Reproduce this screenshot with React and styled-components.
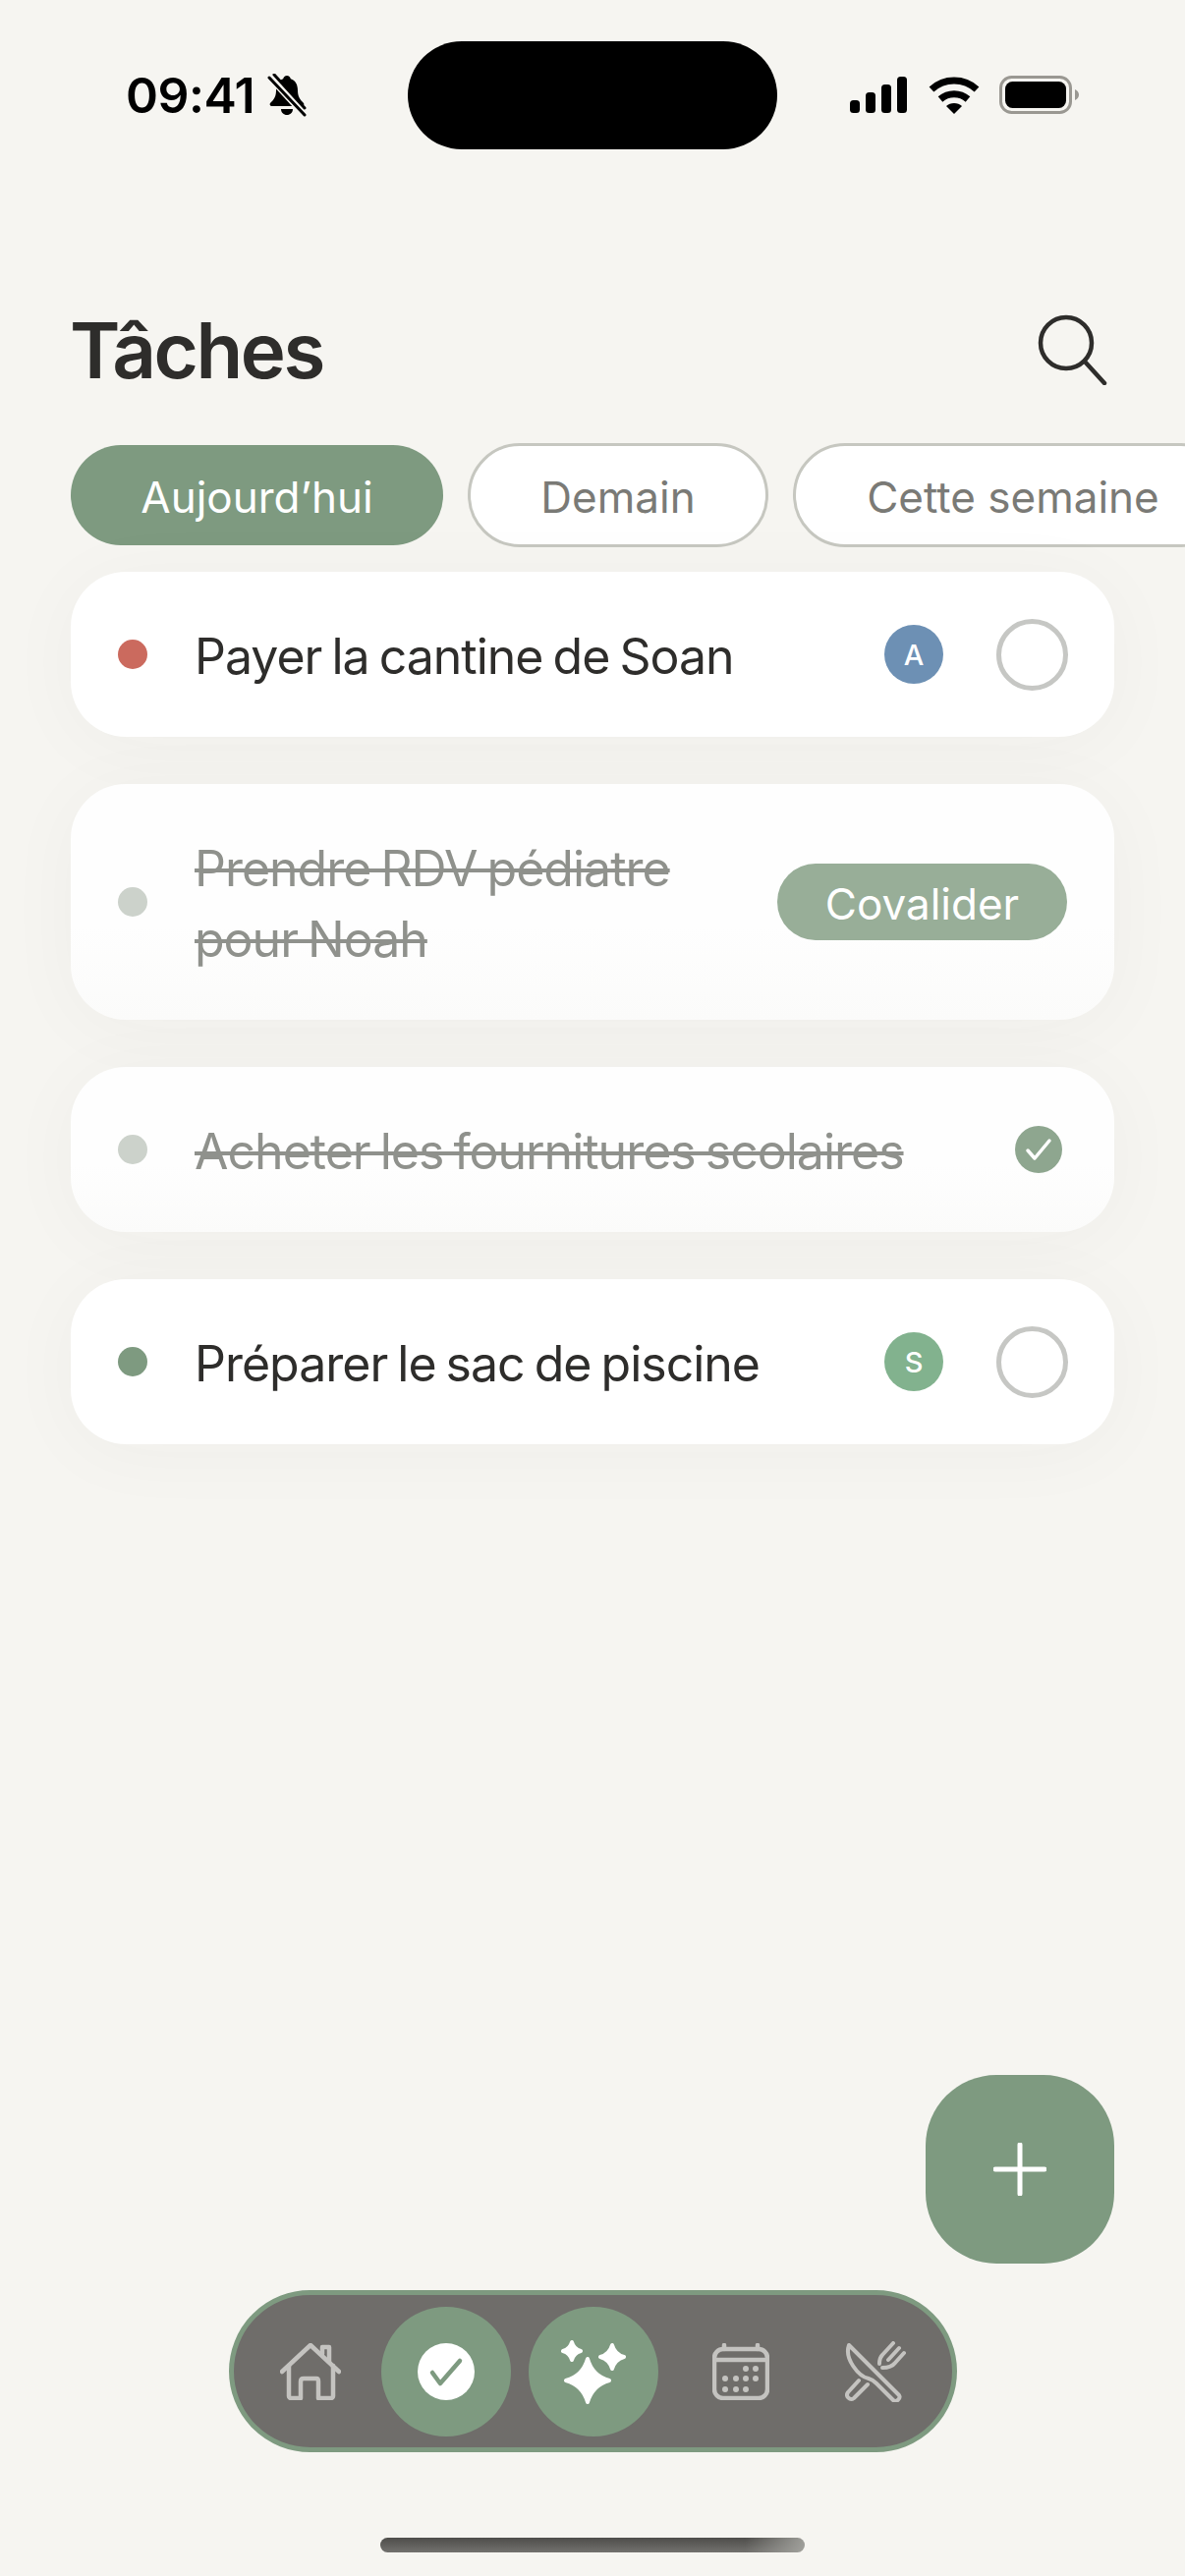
import styled, { createGlobalStyle } from "styled-components";

const SANS = `Inter, "Liberation Sans", sans-serif`;

const Global = createGlobalStyle`
  html, body { margin: 0; padding: 0; background: #f6f5f1; }
  * { box-sizing: border-box; }
`;

const Screen = styled.div`
  width: 1206px;
  height: 2622px;
  overflow: hidden;
  display: flex;
  flex-direction: column;
  background: #f6f5f1;
  font-family: ${SANS};
  color: #2e2d2b;
`;

const StatusBar = styled.div`
  height: 194px;
  padding: 42px 72px 0 128px;
  display: flex;
  align-items: flex-start;
`;

const Clock = styled.div`
  display: flex;
  align-items: center;
  gap: 13px;
  width: 287px;
  height: 110px;
  font-size: 50px;
  font-weight: 600;
  color: #000;
  letter-spacing: -0.5px;
`;

const Island = styled.div`
  width: 376px;
  height: 110px;
  border-radius: 55px;
  background: #000;
`;

const StatusIcons = styled.div`
  display: flex;
  align-items: center;
  gap: 20px;
  height: 110px;
  margin-left: 74px;
`;

const Header = styled.header`
  display: flex;
  justify-content: space-between;
  align-items: center;
  height: 124px;
  margin-top: 100px;
  padding: 0 79px 0 71px;
`;

const Title = styled.h1`
  margin: 0;
  font-size: 78px;
  font-weight: 600;
  letter-spacing: -2.5px;
  color: #2e2d2b;
`;

const Chips = styled.div`
  display: flex;
  align-items: center;
  gap: 25px;
  margin-top: 33px;
  padding-left: 72px;
  height: 106px;
  white-space: nowrap;
`;

const Chip = styled.div`
  flex: none;
  display: flex;
  align-items: center;
  justify-content: center;
  width: ${({ $w }) => $w}px;
  height: ${({ $active }) => ($active ? 102 : 106)}px;
  padding-top: 3px;
  border-radius: 53px;
  font-size: 44px;
  background: ${({ $active }) => ($active ? "#7e9a80" : "#fff")};
  color: ${({ $active }) => ($active ? "#fff" : "#7a7a76")};
  border: ${({ $active }) => ($active ? "none" : "3px solid #c6c7c0")};
`;

const List = styled.div`
  display: flex;
  flex-direction: column;
  gap: 48px;
  margin-top: 25px;
  padding: 0 72px;
`;

const Card = styled.div`
  display: flex;
  align-items: center;
  min-height: ${({ $tall }) => ($tall ? 240 : 168)}px;
  padding: 0 47px 0 48px;
  border-radius: 56px;
  background: ${({ $done }) => ($done ? "linear-gradient(180deg, #fefefe 60%, #fbfbfa 100%)" : "#fff")};
  box-shadow: 0 8px 80px rgba(70, 70, 60, 0.035);
`;

const Dot = styled.span`
  flex: none;
  width: 30px;
  height: 30px;
  border-radius: 50%;
  background: ${({ $color }) => $color};
`;

const Label = styled.div`
  flex: 1;
  margin-left: 48px;
  padding-top: 4px;
  font-size: 50px;
  line-height: 72px;
  letter-spacing: -1px;
  word-spacing: -3px;
  color: ${({ $done }) => ($done ? "#8f918c" : "#2e2d2b")};
  text-decoration: ${({ $done }) => ($done ? "line-through" : "none")};
  text-decoration-thickness: 4px;
`;

const Avatar = styled.span`
  flex: none;
  display: flex;
  align-items: center;
  justify-content: center;
  width: 60px;
  height: 60px;
  border-radius: 50%;
  margin-right: 54px;
  font-size: 29px;
  font-weight: 500;
  color: #fff;
  background: ${({ $color }) => $color};
`;

const Ring = styled.span`
  flex: none;
  width: 73px;
  height: 73px;
  border-radius: 50%;
  border: 5px solid #c6c7c4;
`;

const Covalider = styled.span`
  flex: none;
  display: flex;
  align-items: center;
  justify-content: center;
  width: 295px;
  height: 78px;
  margin-right: 1px;
  padding-top: 3px;
  border-radius: 39px;
  font-size: 44px;
  color: #fff;
  background: #98ae98;
`;

const DoneCheck = styled.span`
  flex: none;
  display: flex;
  align-items: center;
  justify-content: center;
  width: 48px;
  height: 48px;
  margin-right: 6px;
  border-radius: 50%;
  background: #8ea68f;
`;

const Spacer = styled.div`
  flex: 1;
`;

const Fab = styled.div`
  align-self: flex-end;
  display: flex;
  align-items: center;
  justify-content: center;
  width: 192px;
  height: 192px;
  margin-right: 72px;
  border-radius: 72px;
  background: #7e9a80;
`;

const NavBar = styled.nav`
  align-self: flex-start;
  display: flex;
  align-items: center;
  width: 741px;
  height: 165px;
  margin: 27px 0 0 233px;
  padding: 0 0 0 45px;
  border-radius: 83px;
  border: 5px solid #7e9a80;
  background: #6f6d6a;
`;

const NavIcon = styled.div`
  flex: none;
  display: flex;
  align-items: center;
  justify-content: center;
  width: ${({ $w }) => $w}px;
`;

const NavBubble = styled.div`
  flex: none;
  display: flex;
  align-items: center;
  justify-content: center;
  width: 132px;
  height: 132px;
  margin-left: ${({ $ml }) => $ml || 0}px;
  border-radius: 50%;
  background: #7e9a80;
`;

const HomeBar = styled.div`
  align-self: center;
  width: 432px;
  height: 15px;
  margin: 87px 0 24px;
  border-radius: 8px;
  background:
    linear-gradient(90deg, rgba(170, 170, 165, 0) 86%, rgba(170, 170, 165, 0.85) 100%),
    linear-gradient(180deg, #4e4d4a 0%, #72716e 100%);
`;

const BellOff = () => (
  <svg width="40" height="44" viewBox="0 0 40 44">
    <path d="M20 2c2 0 3.500 1.500 3.800 3.200C29 7 31 11.500 31 17c0 6 2 9 6 13 1 1.500 0 3-1.500 3H4.500C3 33 2 31.500 3 30c4-4 6-7 6-13 0-5.500 2-10 7.200-11.800C16.500 3.500 18 2 20 2z" fill="#000" />
    <path d="M14 36h12c0 3.500-2.700 6-6 6s-6-2.500-6-6z" fill="#000" />
    <path d="M3 3l35 38" stroke="#f6f5f1" strokeWidth="8" />
    <path d="M2 4l36 38M7 1l31 34" stroke="#000" strokeWidth="3" strokeLinecap="round" />
  </svg>
);

const Signal = () => (
  <svg width="60" height="38" viewBox="0 0 60 38" fill="#000">
    <rect x="0" y="24" width="10" height="13" rx="3.500" />
    <rect x="16" y="16" width="10" height="21" rx="3.500" />
    <rect x="32" y="8" width="10" height="29" rx="3.500" />
    <rect x="48" y="0" width="10" height="37" rx="3.500" />
  </svg>
);

const Wifi = () => (
  <svg width="52" height="38" viewBox="0 0 52 38" fill="none" stroke="#000">
    <path d="M3 13C16 1 36 1 49 13" strokeWidth="7" />
    <path d="M12 23c8-7 20-7 28 0" strokeWidth="7" />
    <path d="M18 30c4-4 12-4 16 0l-8 8z" fill="#000" stroke="none" />
  </svg>
);

const Battery = () => (
  <svg width="82" height="40" viewBox="0 0 82 40">
    <rect x="1.500" y="1.500" width="71" height="36" rx="11" fill="none" stroke="#9a9892" strokeWidth="3" />
    <rect x="6" y="6" width="62" height="27" rx="7.500" fill="#000" />
    <path d="M77 14c2.500 1 4 3 4 5.500S79.500 24 77 25z" fill="#9a9892" />
  </svg>
);

const Search = () => (
  <svg width="72" height="72" viewBox="0 0 72 72" fill="none" stroke="#2e2d2b" strokeWidth="4.500" strokeLinecap="round">
    <circle cx="30" cy="29" r="26" />
    <path d="M49 48l20 22" />
  </svg>
);

const SmallCheck = () => (
  <svg width="28" height="24" viewBox="0 0 28 24" fill="none" stroke="#fff" strokeWidth="3.500" strokeLinecap="round" strokeLinejoin="round">
    <path d="M3 13l7 8L25 3" />
  </svg>
);

const Plus = () => (
  <svg width="54" height="54" viewBox="0 0 54 54" stroke="#fff" strokeWidth="5" strokeLinecap="round">
    <path d="M27 2v50M2 27h50" />
  </svg>
);

const HomeIcon = () => (
  <svg width="62" height="58" viewBox="0 0 62 58" fill="none" stroke="#c4c3c0" strokeWidth="4.500" strokeLinecap="round" strokeLinejoin="round">
    <path d="M2 29L31 2l29 27" />
    <path d="M9 23v31c0 1 1 2 2 2h10V39c0-2 1-3 3-3h13c2 0 2 1 2 3v17h13c1 0 2-1 2-2V23" />
    <path d="M43 11V4h7v15" />
  </svg>
);

const CheckBadge = () => (
  <svg width="58" height="58" viewBox="0 0 58 58">
    <circle cx="29" cy="29" r="29" fill="#fff" />
    <path d="M15 30l8 11 20-23" fill="none" stroke="#7e9a80" strokeWidth="4.500" strokeLinecap="round" strokeLinejoin="round" />
  </svg>
);

// four-point star with concave sides, the round stroke softens the tips
const starPath = (cx, cy, r) => {
  const k = r * 0.22;
  return `M${cx} ${cy - r}Q${cx + k} ${cy - k} ${cx + r} ${cy}Q${cx + k} ${cy + k} ${cx} ${cy + r}Q${cx - k} ${cy + k} ${cx - r} ${cy}Q${cx - k} ${cy - k} ${cx} ${cy - r}Z`;
};

const Sparkles = () => (
  <svg width="66" height="66" viewBox="0 0 66 66" fill="#fff" stroke="#fff" strokeWidth="4" strokeLinejoin="round">
    <path d={starPath(27, 42, 22)} />
    <path d={starPath(11, 12, 9)} />
    <path d={starPath(52, 18, 12)} />
  </svg>
);

const calendarDots = [
  [34, 26], [44, 26],
  [13, 36], [24, 36], [34, 36], [44, 36],
  [13, 47], [24, 47], [34, 47],
];

const CalendarIcon = () => (
  <svg width="58" height="58" viewBox="0 0 58 58" fill="none" stroke="#c4c3c0" strokeWidth="4.500" strokeLinecap="round">
    <rect x="2" y="6" width="54" height="50" rx="9" />
    <path d="M2 17h54M12 2v4M46 2v4" />
    <g fill="#c4c3c0" stroke="none">
      {calendarDots.map(([x, y]) => <circle key={`${x}-${y}`} cx={x} cy={y} r="3" />)}
    </g>
  </svg>
);

const CutleryIcon = () => (
  <svg width="62" height="62" viewBox="0 0 62 62" fill="none" stroke="#c4c3c0" strokeWidth="4" strokeLinecap="round" strokeLinejoin="round">
    <path d="M4 4L55 55c2 3-3 8-6 5L32 43c-3-3-4-4-8-5C14 36-1 18 4 4z" />
    <path d="M14 40L3 52c-3 4 2 9 6 6L23 44" />
    <path d="M49 2L38 14c-3 3-3 6-3 9M55 7L44 19M60 12L51 22c-3 4-8 5-13 5" />
  </svg>
);

const tasks = [
  { id: 1, label: "Payer la cantine de Soan", dot: "#cb6a5e", avatar: "A", tint: "#6d90b4" },
  { id: 2, label: "Prendre RDV pédiatre pour Noah", dot: "#ccd2cb", done: true, tall: true, cosign: true },
  { id: 3, label: "Acheter les fournitures scolaires", dot: "#ccd2cb", done: true, checked: true },
  { id: 4, label: "Préparer le sac de piscine", dot: "#7e9a80", avatar: "S", tint: "#82b28e" },
];

const App = () => {
  return (
    <Screen>
      <Global />
      <StatusBar>
        <Clock>09:41 <BellOff /></Clock>
        <Island />
        <StatusIcons>
          <Signal />
          <Wifi />
          <Battery />
        </StatusIcons>
      </StatusBar>

      <Header>
        <Title>Tâches</Title>
        <Search />
      </Header>

      <Chips>
        <Chip $active $w={379}>Aujourd’hui</Chip>
        <Chip $w={306}>Demain</Chip>
        <Chip $w={448}>Cette semaine</Chip>
      </Chips>

      <List>
        {tasks.map((t) => (
          <Card key={t.id} $tall={t.tall} $done={t.done}>
            <Dot $color={t.dot} />
            <Label $done={t.done}>{t.label}</Label>
            {t.avatar && <Avatar $color={t.tint}>{t.avatar}</Avatar>}
            {t.avatar && <Ring />}
            {t.cosign && <Covalider>Covalider</Covalider>}
            {t.checked && <DoneCheck><SmallCheck /></DoneCheck>}
          </Card>
        ))}
      </List>

      <Spacer />

      <Fab><Plus /></Fab>

      <NavBar>
        <NavIcon $w={66}><HomeIcon /></NavIcon>
        <NavBubble $ml={39}><CheckBadge /></NavBubble>
        <NavBubble $ml={18}><Sparkles /></NavBubble>
        <NavIcon $w={168}><CalendarIcon /></NavIcon>
        <NavIcon $w={106}><CutleryIcon /></NavIcon>
      </NavBar>

      <HomeBar />
    </Screen>
  );
};

export default App;
